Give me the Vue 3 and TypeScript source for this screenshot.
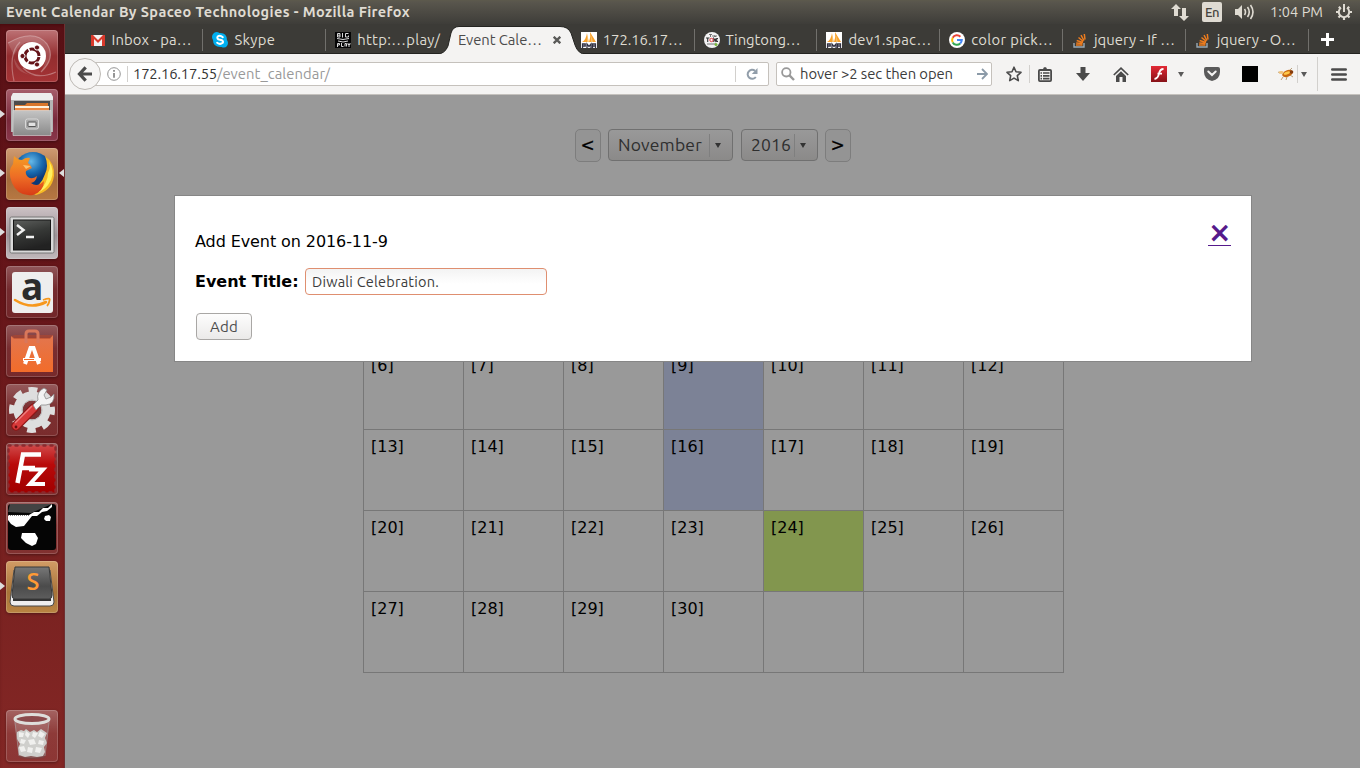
<script setup lang="ts">
import type { Directive } from 'vue'

// Spreads a label's letters so that it fills the given width.
const vFit: Directive<HTMLElement, number> = {
  mounted(el, { value }) {
    const count = (el.textContent ?? '').length
    const natural = el.getBoundingClientRect().width
    if (count > 0) el.style.letterSpacing = `${(value - natural) / count}px`
  },
}

interface Tab { icon: string; label: string; width: number; active?: boolean; sep?: boolean }
const tabs: Tab[] = [
  { icon: 'gmail', label: 'Inbox - pa…', width: 80, sep: true },
  { icon: 'skype', label: 'Skype', width: 41, sep: true },
  { icon: 'bigplay', label: 'http:…play/', width: 83 },
  { icon: '', label: 'Event Cale…', width: 84, active: true },
  { icon: 'pma', label: '172.16.17…', width: 80, sep: true },
  { icon: 'ting', label: 'Tingtong…', width: 75, sep: true },
  { icon: 'pma', label: 'dev1.spac…', width: 83, sep: true },
  { icon: 'google', label: 'color pick…', width: 82, sep: true },
  { icon: 'stack', label: 'jquery - If …', width: 81, sep: true },
  { icon: 'stack', label: 'jquery - O…', width: 79, sep: true },
]

interface App { id: string; running?: boolean; focused?: boolean }
const apps: App[] = [
  { id: 'dash' }, { id: 'files', running: true }, { id: 'firefox', running: true, focused: true },
  { id: 'terminal', running: true }, { id: 'amazon' }, { id: 'software' }, { id: 'settings' },
  { id: 'filezilla' }, { id: 'meld' }, { id: 'sublime', running: true }, { id: 'trash' },
]

// The visible weeks: the 6th to the 30th, padded to full rows.
const days: (number | null)[] = [...Array.from({ length: 25 }, (_, i) => i + 6), null, null, null]
const weeks = Array.from({ length: 4 }, (_, w) => days.slice(w * 7, w * 7 + 7))
</script>

<template>
  <div class="desktop">
    <header class="panel">
      <span v-fit="404" class="window-title">Event Calendar By Spaceo Technologies - Mozilla Firefox</span>
      <div class="indicators">
        <svg class="net" width="18" height="17" viewBox="0 0 18 17"><path fill="#dfdbd2" d="M5 0 10 5H7V12H3V5H0ZM13 17 8 12H11V4H15V12H18Z" /></svg>
        <span class="lang">En</span>
        <svg class="vol" width="21" height="16" viewBox="0 0 21 16"><path fill="#dfdbd2" d="M1 5H4L8 1V15L4 11H1Z" /><path fill="none" stroke="#dfdbd2" stroke-width="1.6" d="M10.5 5Q12.5 8 10.5 11M13.5 3Q17 8 13.5 13M16.5 1Q21.5 8 16.5 15" /></svg>
        <span v-fit="53" class="clock">1:04 PM</span>
        <svg class="gear" width="16" height="16" viewBox="0 0 16 16"><g fill="none" stroke="#dfdbd2"><path stroke-width="2" d="M5 3.7A5.2 5.2 0 1 0 11 3.7" /><path stroke-width="2" d="M8 0V8" /><path stroke-width="2.2" d="M2.8 2.8 4.3 4.3M13.2 2.8 11.7 4.3M0 8H3M13 8H16M2.5 13.5 4.5 11.5M13.5 13.5 11.5 11.5M8 13V16" /></g></svg>
      </div>
    </header>

    <div class="body">
      <nav class="launcher">
        <div v-for="app in apps" :key="app.id" class="tile" :class="app.id">
          <i v-if="app.running" class="run" />
          <i v-if="app.focused" class="focus" />
          <svg v-if="app.id === 'dash'" viewBox="0 0 52 52">
            <g fill="none" stroke="#fff" stroke-opacity=".3" stroke-width="1.2"><path d="M2 13Q28-2 41 14Q50 28 35 42" /><path d="M8 51Q2 24 14 12" /><path d="M50 42Q30 51 17 38" /></g>
            <path fill="#fff" fill-opacity=".14" d="M2 13Q28-2 41 14Q50 28 35 42Q46 22 31 13Q17 7 8 25ZM8 28Q8 42 25 45Q40 48 50 42Q20 55 8 28Z" />
            <circle cx="26" cy="26" r="14" fill="#fff" />
            <circle cx="26" cy="26" r="7" fill="none" stroke="#651318" stroke-width="3" stroke-dasharray="13.2 1.5" stroke-dashoffset="-1" />
            <g fill="#651318" stroke="#fff" stroke-width="1"><circle cx="16.5" cy="26" r="2.6" /><circle cx="31" cy="17.5" r="2.6" /><circle cx="31" cy="34.5" r="2.6" /></g>
          </svg>
          <svg v-else-if="app.id === 'files'" viewBox="0 0 52 52">
            <defs><linearGradient id="cab" x2="0" y2="1"><stop stop-color="#c4c4c4" /><stop offset="1" stop-color="#8a8a8a" /></linearGradient></defs>
            <path fill="#b4b4b4" d="M7 4H45L47 8V43H5V8Z" /><path fill="#ededed" d="M7 4H45L47 8V11H5V8Z" />
            <path fill="#4b4b4b" d="M8 12H44V22H8Z" /><path fill="#d9762b" d="M9 16H19L21 14H42V22H9Z" /><path fill="#fff2dd" d="M9 17H43V19H9Z" /><path fill="#eb8a45" d="M9 19H43V22H9Z" />
            <path fill="url(#cab)" stroke="#ddd" stroke-width=".6" d="M7 21.5H45V46.5H7Z" />
            <rect x="19.5" y="30" width="13" height="10" rx="2" fill="#a9a9a9" stroke="#d8d8d8" /><rect x="22" y="33" width="8" height="4.5" rx=".5" fill="#e2e2e2" stroke="#555" />
          </svg>
          <svg v-else-if="app.id === 'firefox'" viewBox="0 0 52 52">
            <defs><radialGradient id="globe" cx=".45" cy=".25"><stop stop-color="#65b8e8" /><stop offset=".6" stop-color="#1768ae" /><stop offset="1" stop-color="#0d3877" /></radialGradient><linearGradient id="fox" x2="0" y2="1"><stop stop-color="#f59c24" /><stop offset=".55" stop-color="#ed6b25" /><stop offset="1" stop-color="#d73c16" /></linearGradient></defs>
            <circle cx="27" cy="23" r="19" fill="url(#globe)" />
            <path fill="#f7ba24" d="M39 8Q49 15 48 28Q46 43 30 47L22 43Q35 39 39 26Q43 18 39 8Z" /><path fill="#fff05e" d="M43 13Q49 23 45 32Q40 42 32 44Q42 35 42 25Q45 20 43 13Z" />
            <path fill="url(#fox)" d="M8 8Q12 12 16 12Q20 9 24 10L22 15Q25 17 26 20L20 23Q19 26 22 29Q26 32 31 28Q30 34 25 35Q31 40 38 33Q38 43 27 47Q12 49 6 35Q1 23 7 16Z" />
            <path fill="#ffc36b" d="M17 17 25 18 20 21Z" />
          </svg>
          <svg v-else-if="app.id === 'terminal'" viewBox="0 0 52 52">
            <defs><linearGradient id="term" x2=".3" y2="1"><stop stop-color="#5d5f5d" /><stop offset=".5" stop-color="#373937" /><stop offset="1" stop-color="#222" /></linearGradient></defs>
            <rect x="4" y="10" width="44" height="36" rx="1.5" fill="#d9d9d9" stroke="#777" /><rect x="7.5" y="13" width="37" height="30" fill="url(#term)" stroke="#151515" />
            <path fill="none" stroke="#f2f2f2" stroke-width="2.5" d="M11 18 17.5 23 11 28M20 30H28" />
          </svg>
          <svg v-else-if="app.id === 'amazon'" viewBox="0 0 52 52">
            <rect x="6" y="6" width="41" height="41" rx="3" fill="#eee" />
            <text x="26.3" y="34" text-anchor="middle" font-family="Open Sans, sans-serif" font-size="37" font-weight="700" fill="#2b2b2b">a</text>
            <path fill="none" stroke="#f7981d" stroke-width="2.6" stroke-linecap="round" d="M9 34Q25 44 40 36" /><path fill="none" stroke="#f7981d" stroke-width="1.8" d="M37 34Q45 31 43.5 34.5 43 38 41 40" />
          </svg>
          <svg v-else-if="app.id === 'software'" viewBox="0 0 52 52">
            <defs><linearGradient id="bag" x2="0" y2="1"><stop stop-color="#e2764f" /><stop offset="1" stop-color="#f26c2a" /></linearGradient></defs>
            <path fill="url(#bag)" d="M5 11 8 13H44L47 10V47H5Z" /><path fill="#b5472b" fill-opacity=".55" d="M5 11 9 10H44L47 10 44 14H8Z" />
            <path fill="none" stroke="#d9775a" stroke-width="3" d="M20 18V9Q20 6 23 6H29Q32 6 32 9V18" />
            <path fill="none" stroke="#fff" stroke-width="4" d="M19 39 24.5 23H27.5L33 39" /><path stroke="#fff" stroke-width="3" d="M17 34.5H35" /><path stroke="#f26c2a" stroke-width="1" d="M18 34.5H28" />
          </svg>
          <svg v-else-if="app.id === 'settings'" viewBox="0 0 52 52">
            <g fill="none" stroke="#dedede"><circle cx="26" cy="26" r="14" stroke-width="9" /><circle cx="26" cy="26" r="20" stroke-width="6" stroke-dasharray="8.7 7" stroke-dashoffset="4" /></g>
            <circle cx="26" cy="26" r="10" fill="none" stroke="#bbb" />
            <path stroke="#8f1414" stroke-width="9.5" stroke-linecap="round" d="M10 42 28 24" /><path stroke="#d83a3a" stroke-width="7" stroke-linecap="round" d="M10 42 28 24" /><path stroke="#f08080" stroke-width="1.5" d="M9 39 26 22" />
            <path fill="#f3f3f3" stroke="#8c8c8c" stroke-width=".8" d="M27 21 32 16Q30 8 38 4L41 6 38 11 40 15 45 13 48 10Q49 20 40 21L35 21 30 26Z" /><circle cx="10" cy="43" r="1.4" fill="#661010" />
          </svg>
          <svg v-else-if="app.id === 'filezilla'" viewBox="0 0 52 52">
            <defs><linearGradient id="fz" x2="0" y2="1"><stop stop-color="#d04848" /><stop offset=".4" stop-color="#b90a0a" /><stop offset="1" stop-color="#a00000" /></linearGradient></defs>
            <rect x="2.5" y="2.5" width="47" height="47" fill="url(#fz)" stroke="#8c2a2e" stroke-width="2.4" stroke-dasharray="2 5" stroke-linecap="round" />
            <path fill="none" stroke="#fff" stroke-width="4.5" d="M35 11.5H17L11.5 40M14 25H29" /><path fill="none" stroke="#fff" stroke-width="4" d="M23 26.5H37L24 41H39" />
          </svg>
          <svg v-else-if="app.id === 'meld'" viewBox="0 0 52 52">
            <rect x="2" y="2" width="48" height="46" rx="3" fill="#050505" /><path fill="#777" fill-opacity=".55" d="M4 2H46L25 11 2 10Z" />
            <path fill="#fff" d="M2 13H23L28 10 33 10 37 6 42 6 46 2 46 5 41 9 36 10 31 14 26 14 22 19 18 24 10 25 5 22 2 18Z" /><path fill="none" stroke="#111" stroke-dasharray="1 1" d="M2 13H23" />
            <path fill="#fff" d="M39 14 43 13 45 15 44 19H40L38 17ZM16 31H29L32 36 30 42 26 44 20 41 15 36Z" />
          </svg>
          <svg v-else-if="app.id === 'sublime'" viewBox="0 0 52 52">
            <defs><linearGradient id="sub" x2="0" y2="1"><stop stop-color="#777" /><stop offset=".6" stop-color="#4b4b4b" /><stop offset="1" stop-color="#5d5d5d" /></linearGradient></defs>
            <path fill="#eee" stroke="#494949" d="M8 9H44L48 41Q48 45 44 45H8Q4 45 4 41Z" /><path fill="url(#sub)" stroke="#393939" d="M9 6H43L46 34Q46 38 43 38H9Q6 38 6 34Z" /><path stroke="#333" stroke-width="2" d="M7 39H45" />
            <text x="20.5" y="28.5" font-family="Open Sans, sans-serif" font-size="23" font-weight="600" fill="#ff9a35" textLength="13" lengthAdjust="spacingAndGlyphs">S</text>
          </svg>
          <svg v-else viewBox="0 0 52 52">
            <path fill="#ddd" fill-opacity=".2" d="M8 9H44L39 46Q26 50 13 46Z" />
            <path fill="#555" fill-opacity=".3" d="M12 44H40L38 48Q26 50 14 48Z" />
            <path fill="#cfcfcc" d="M11 22 15 20 18 21 20 19 24 22 28 20 31 22 35 19 41 23 39 28 41 33 38 37 39 42 37 46 31 47 25 46 19 47 13 45 12 38 14 34 11 29Z" />
            <path fill="#f0f0ee" d="M13 22 18 23 17 27 13 27ZM20 21 24 24 22 28 19 25ZM27 22 32 23 29 28 26 26ZM34 21 39 24 36 28 32 26ZM15 29 20 30 18 34 14 33ZM22 30 28 29 30 34 24 35ZM33 30 38 31 37 35 32 34ZM13 37 18 36 20 41 15 42ZM22 37 27 38 26 43 21 42ZM30 37 36 38 34 43 29 42Z" />
            <ellipse cx="26" cy="9" rx="17" ry="4.5" fill="#8b4a4c" stroke="#dededb" stroke-width="3" /><path fill="none" stroke="#aaa" stroke-opacity=".5" d="M9 12 13 46M43 12 39 46" />
          </svg>
        </div>
      </nav>

      <main class="browser">
        <div class="tabs">
          <div v-for="(tab, n) in tabs" :key="n" class="tab" :class="{ active: tab.active, sep: tab.sep }">
            <svg v-if="tab.active" class="tab-shape" viewBox="0 0 148 30" width="148" height="30"><path fill="#f4f3f2" stroke="#242421" d="M-2 30.5Q7 30 10 22L13 9Q15 2.5 21 2.5H122Q130 2.5 133 9L137 21Q140 30 148 30.5" /></svg>
            <svg v-if="tab.icon" class="fav" width="16" height="16" viewBox="0 0 16 16">
              <template v-if="tab.icon === 'gmail'"><path fill="#f2f2f2" d="M1 3H15V14H1Z" /><path fill="#d9392b" d="M1 3H3L8 8 13 3H15V14H12V7L8 11 4 7V14H1Z" /></template>
              <template v-else-if="tab.icon === 'skype'"><path fill="#00aff0" d="M4.5 0Q6.2 0 7.5 1Q14.8.5 15 8Q17 11 15 14Q13 16.5 9.5 15Q1 15.5 1 8Q-1 5 1 2Q2.5 0 4.5 0Z" /><path fill="none" stroke="#fff" stroke-width="2" stroke-linecap="round" d="M10.8 5.2Q8 2.8 5.7 4.5Q4.3 7 8 7.7 12 8.5 10.8 10.8 8 13 5.2 10.7" /></template>
              <template v-else-if="tab.icon === 'bigplay'"><rect width="16" height="16" fill="#050505" /><g fill="none" stroke="#d8d8d8"><path d="M2.5 1.5H5V5H2.5ZM2 3.2H5M7.5 1V5.5M13.5 1.5H10.5V5H13.5V3.5M2 6.5Q8 8.5 14 6.5M3 9Q8 11 13 9M2.5 15V11.5H4.5V13H3M6.5 11V14.5H8.5M10 14.5V11.5H11.5V14.5M13 11V12.5H15V11M14 12V15" /></g></template>
              <template v-else-if="tab.icon === 'pma'"><rect width="16" height="16" fill="#fff" /><path fill="#f9a22b" d="M1 10Q5 8 6 1L7 10ZM8 10Q10 5 9 0L15 10Z" /><path fill="#f6c06b" d="M6 10V2L8 10ZM10 10V3L12 10Z" /><path fill="none" stroke="#334" stroke-width="1.3" d="M1.5 16V12H4.2V14H2M6 16V12L8 14.5 10 12V16M11.5 16V12H14.5V16M11.5 14H14.5" /></template>
              <template v-else-if="tab.icon === 'ting'"><circle cx="8" cy="8" r="8" fill="#f3f3f3" /><g fill="none" stroke="#666" stroke-width=".9"><path d="M5 2.5H8M6.5 2.5V5M9 3V5M10.5 5V3.5L12 5V3M3 12H12" /></g><path fill="none" stroke="#333" stroke-width="1.1" d="M2 6H5.5M3.7 6V10M9.8 10V6.5L11.5 9V6.5M14 6.5H12.7V9.5H14" /><circle cx="7.5" cy="8" r="1.7" fill="none" stroke="#e8363d" /><circle cx="12" cy="12.5" r="1.5" fill="#79b73b" /></template>
              <template v-else-if="tab.icon === 'google'"><circle cx="8" cy="8" r="8" fill="#fff" /><g fill="none" stroke-width="2"><path stroke="#ea4335" d="M3.7 5.7A4.8 4.8 0 0 1 11.4 4.7" /><path stroke="#fbbc05" d="M3.7 5.7A5 5 0 0 0 3.7 10.4" /><path stroke="#34a853" d="M3.7 10.4A4.8 4.8 0 0 0 11.2 11.5" /><path stroke="#4285f4" d="M11.2 11.5Q12.7 10 12.8 8H8" /></g></template>
              <template v-else><path fill="none" stroke="#9aaab5" stroke-width="1.4" d="M2 11V15H12V11" /><path stroke="#ed7c1e" stroke-width="1.5" d="M4 13H10.5M4.2 11 10.5 11.5M4.7 8.5 11 10.5M6.5 5.5 11.3 9.3M9 3.2 12 8.5M12.3 2 13 7.5" /></template>
            </svg>
            <span v-fit="tab.width" class="tab-label">{{ tab.label }}</span>
            <svg v-if="tab.active" class="tab-close" width="8" height="8" viewBox="0 0 8 8"><path stroke="#5a5a58" stroke-width="2.3" d="M.7.7 7.3 7.3M7.3.7.7 7.3" /></svg>
          </div>
          <svg class="new-tab" width="13" height="13" viewBox="0 0 13 13"><path stroke="#fff" stroke-width="3" d="M6.5 0V13M0 6.5H13" /></svg>
        </div>

        <div class="toolbar">
          <div class="back"><svg width="16" height="16" viewBox="0 0 16 16"><path fill="none" stroke="#4b4b4b" stroke-width="3.2" d="M8.7 1.3 2.5 8 8.7 14.7M2.5 8H15" /></svg></div>
          <div class="url">
            <svg class="info" width="14" height="14" viewBox="0 0 14 14"><circle cx="7" cy="7" r="6.3" fill="none" stroke="#949494" /><path stroke="#8a8a8a" stroke-width="1.8" d="M7 6V10.8M7 3V4.8" /></svg>
            <i class="url-sep" />
            <span v-fit="84" class="host">172.16.17.55</span><span v-fit="113" class="path">/event_calendar/</span>
            <i class="url-sep reload-sep" />
            <svg class="reload" width="12" height="12" viewBox="0 0 12 12"><path fill="none" stroke="#929eaa" stroke-width="2" d="M9 2.8A4.5 4.5 0 1 0 9.8 9" /><path fill="#929eaa" d="M11.5 0V6H5.8Z" /></svg>
          </div>
          <div class="search">
            <svg width="14" height="14" viewBox="0 0 14 14"><circle cx="5.3" cy="5.3" r="4.2" fill="none" stroke="#999" stroke-width="1.8" /><path stroke="#999" stroke-width="2.4" d="M8.2 8.2 13 13" /></svg>
            <span v-fit="153">hover &gt;2 sec then open</span>
            <svg class="go" width="11" height="12" viewBox="0 0 11 12"><path fill="none" stroke="#8b9aa8" stroke-width="1.8" d="M0 6H9M5 1 10 6 5 11" /></svg>
          </div>
          <div class="tools">
            <svg width="16" height="16" viewBox="0 0 16 16"><path fill="none" stroke="#4a4a4a" stroke-width="1.6" stroke-linejoin="round" d="M8 1.2 10 5.7 15 6.3 11.3 9.6 12.3 14.6 8 12.1 3.7 14.6 4.7 9.6 1 6.3 6 5.7Z" /></svg>
            <i class="tool-sep first" />
            <svg class="clip" width="14" height="15" viewBox="0 0 14 15"><path fill="none" stroke="#4a4a4a" stroke-width="1.8" d="M2 3H12Q13.1 3 13.1 4V13Q13.1 14.1 12 14.1H2Q.9 14.1.9 13V4Q.9 3 2 3Z" /><path fill="#4a4a4a" d="M3.5 4V2.5H5Q5 0 7 0T9 2.5H10.5V4Z" /><path stroke="#4a4a4a" stroke-width="1.7" d="M2.5 6H4M5 6H11.5M2.5 8.8H4M5 8.8H11.5M2.5 11.6H4M5 11.6H11.5" /></svg>
            <svg class="down" width="14" height="14" viewBox="0 0 14 14"><path fill="#4a4a4a" d="M4.5 0H9.5V6H14L7 14 0 6H4.5Z" /></svg>
            <svg class="home" width="16" height="15" viewBox="0 0 16 15"><path fill="none" stroke="#4a4a4a" stroke-width="1.7" d="M.8 8 8 1.2 15.2 8" /><path fill="#4a4a4a" d="M3 9 8 4.2 13 9V15H9.5V10H6.5V15H3Z" /></svg>
            <svg class="flash" width="16" height="16" viewBox="0 0 16 16"><defs><linearGradient id="flash" x2="0" y2="1"><stop stop-color="#e32935" /><stop offset="1" stop-color="#861117" /></linearGradient></defs><path fill="url(#flash)" d="M0 0H16V16H0Z" /><path fill="none" stroke="#fff" stroke-width="1.8" d="M12.5 3Q9 3 8 7.5Q7 12.5 3.5 13M6.5 7.7H11" /></svg>
            <i class="caret c1" />
            <svg class="pocket" width="16" height="14" viewBox="0 0 16 14"><path fill="#5a5a5a" d="M2 0H14Q16 0 16 2V5Q16 12 8 14Q0 12 0 5V2Q0 0 2 0Z" /><path fill="none" stroke="#f4f3f2" stroke-width="2" stroke-linecap="round" d="M4.3 4.5 8 8 11.7 4.5" /></svg>
            <i class="swatch" />
            <svg class="bug" width="16" height="13" viewBox="0 0 16 13"><path stroke="#a98a5c" stroke-width=".8" d="M2 5 0 4M5 9 3 12M9 9 8 12M12 7 15 9M12 2 14 0" /><ellipse cx="9.5" cy="5.5" rx="5.5" ry="3.3" transform="rotate(-20 9.5 5.5)" fill="#c9680f" /><ellipse cx="9" cy="5" rx="3.4" ry="1.4" transform="rotate(-20 9 5)" fill="#ffc94a" /><circle cx="13.5" cy="4" r="1.8" fill="#853b0d" /><ellipse cx="3.2" cy="4.5" rx="2.6" ry="1.4" fill="#efc27c" /></svg>
            <i class="tool-sep second" />
            <i class="caret c2" />
            <i class="tool-sep third" />
            <svg class="menu" width="16" height="13" viewBox="0 0 16 13"><path stroke="#4b4b4b" stroke-width="2.6" stroke-linecap="round" d="M1.3 1.5H14.7M1.3 6.5H14.7M1.3 11.5H14.7" /></svg>
          </div>
        </div>

        <section class="page">
          <div class="picker">
            <span class="step">&lt;</span>
            <span class="select month"><span v-fit="84">November</span><i class="select-sep" /><i class="caret" /></span>
            <span class="select year"><span v-fit="40">2016</span><i class="select-sep" /><i class="caret" /></span>
            <span class="step">&gt;</span>
          </div>
          <table class="calendar">
            <tbody>
              <tr v-for="(week, w) in weeks" :key="w">
                <td v-for="(day, d) in week" :key="d" :class="{ event: day === 9 || day === 16, today: day === 24 }">{{ day ? `[${day}]` : '' }}</td>
              </tr>
            </tbody>
          </table>
          <div class="dialog">
            <a class="close">×</a>
            <p class="heading">Add Event on 2016-11-9</p>
            <div class="field"><b>Event Title:</b><span class="input"><span v-fit="127">Diwali Celebration.</span></span></div>
            <span class="add"><span v-fit="28">Add</span></span>
          </div>
        </section>
      </main>
    </div>
  </div>
</template>

<style>
body { margin: 0; overflow: hidden; }
</style>

<style scoped>
* { box-sizing: border-box; }
.desktop { width: 1360px; height: 768px; display: flex; flex-direction: column; font: 14.8px/20px Ubuntu, "Noto Sans", "Open Sans", sans-serif; overflow: hidden; white-space: nowrap; }
i { display: block; flex: none; }
svg { display: block; flex: none; }
.panel { height: 24px; flex: none; display: flex; align-items: center; justify-content: space-between; padding: 0 8px 0 6px; background: linear-gradient(#5d5a4c 0, #59564d 2px, #3e3d39 100%); color: #dfdbd2; }
.window-title { font-weight: 700; font-size: 14.5px; }
.indicators { display: flex; align-items: center; }
.lang { width: 20px; height: 20px; margin-left: 13px; border-radius: 2px; background: #dfdbd2; color: #45433d; font-size: 13px; font-weight: 500; text-align: center; line-height: 21px; letter-spacing: -.4px; }
.vol { margin-left: 12px; }
.clock { margin-left: 15px; font-size: 14.5px; }
.gear { margin-left: 13px; }

.body { flex: 1; display: flex; min-height: 0; }
.launcher { width: 65px; flex: none; display: flex; flex-direction: column; gap: 7px; padding: 6px 0 6px 6px; background: linear-gradient(#5a1116 0, #661519 36%, #75201f 65%, #842725 100%); border-right: 1px solid #6f3032; box-shadow: inset 0 3px 4px -2px #3008; }
.tile { position: relative; width: 52px; height: 52px; flex: none; border-radius: 4px; background: linear-gradient(#ffffff48, #ffffff18 45%, #ffffff12); box-shadow: inset 0 0 0 1px #ffffff2e, 0 1px 3px #0005; }
.tile svg { width: 52px; height: 52px; overflow: visible; }
.tile.dash { background: linear-gradient(#bd7275, #932d2f 50%, #a53335); }
.tile.files { background: linear-gradient(#a75e6b, #79293b 60%, #8a384b); }
.tile.firefox { background: linear-gradient(#cf9b73, #a56b3b 60%, #b77842); }
.tile.terminal { background: linear-gradient(#ccc2c5, #9d9397 55%, #c1b9bb); }
.tile.sublime { background: linear-gradient(#d29c66, #a87338 60%, #b98443); }
.tile.trash { margin-top: auto; }
.run { position: absolute; left: -6px; top: 21px; border: solid transparent; border-width: 4px 0 4px 5px; border-left-color: #ddd; }
.focus { position: absolute; right: -6px; top: 21px; border: solid transparent; border-width: 4px 5px 4px 0; border-right-color: #ddd; }

.browser { flex: 1; display: flex; flex-direction: column; min-width: 0; }
.tabs { height: 30px; flex: none; display: flex; align-items: center; padding-left: 15.6px; background: #3c3b37; border-bottom: 1px solid #242421; }
.tab { position: relative; width: 122.8px; height: 30px; flex: none; display: flex; align-items: center; padding: 3px 0 0 9px; color: #dfdbd2; }
.tab.sep::after { content: ""; position: absolute; right: 0; top: 5px; width: 1px; height: 22px; background: #71706c; }
.fav { margin-right: 6px; }
.tab.active { color: #4c4c4c; z-index: 1; }
.tab-shape { position: absolute; left: -11px; top: 0; }
.tab-label { position: relative; }
.tab-close { position: relative; margin-left: 11px; }
.new-tab { margin: 2px 0 0 12px; }
.toolbar { height: 41px; flex: none; display: flex; align-items: center; background: #f4f3f2; border-bottom: 1px solid #c4c1bd; color: #3c3c3c; }
.back { position: relative; z-index: 1; width: 32px; height: 32px; margin-left: 4px; border: 1px solid #bdb9b4; border-radius: 50%; background: #f6f5f4; display: grid; place-items: center; }
.url { width: 675px; height: 24px; margin-left: -7px; padding-left: 12px; border: 1px solid #c5c1bc; border-radius: 2px; background: #fff; display: flex; align-items: center; }
.url-sep { width: 1px; height: 16px; margin: 0 5px 0 6px; background: #d2d0cd; }
.host { color: #333; }
.path { color: #999; }
.reload-sep { margin: 0 10px 0 auto; }
.reload { margin-right: 10px; }
.search { width: 216px; height: 24px; margin-left: 7px; padding: 0 3px 0 4px; border: 1px solid #c5c1bc; border-radius: 2px; background: #fff; display: flex; align-items: center; gap: 5px; }
.go { margin-left: auto; }
.tools { display: flex; align-items: center; margin-left: 14px; }
.tool-sep { width: 1px; height: 18px; background: #d2d0cd; }
.first { margin: 0 8px 0 7px; }
.down { margin-left: 24px; }
.home { margin-left: 23px; }
.flash { margin-left: 22px; }
.caret { border: solid transparent; border-width: 5px 3px 0; border-top-color: #5a5a5a; }
.c1 { margin-left: 11px; }
.pocket { margin-left: 20px; }
.swatch { width: 16px; height: 16px; margin-left: 22px; background: #000; }
.bug { margin-left: 20px; }
.second { margin: 0 3px 0 3px; }
.third { height: 34px; margin: 0 13px 0 10px; }

.page { position: relative; flex: 1; background: #999; font: 16px/20px "DejaVu Sans", sans-serif; color: #000; }
.picker { height: 33px; display: flex; justify-content: center; align-items: flex-start; gap: 7px; margin-top: 34px; }
.step { width: 26px; height: 33px; border: 1px solid #7d7d7d; border-radius: 5px; background: #949494; text-align: center; line-height: 31px; font-size: 17px; -webkit-text-stroke: .2px; }
.select { height: 32px; display: flex; align-items: center; padding-left: 9.5px; border: 1px solid #707070; border-radius: 4px; background: linear-gradient(#999, #8b8a89); color: #2e2e2e; font: 17.5px/20px Ubuntu, "Noto Sans", sans-serif; }
.month { width: 125px; }
.year { width: 77px; margin-left: 1px; }
.select-sep { width: 1px; height: 23px; margin: 0 5px 0 auto; background: #7f7f7f; }
.select .caret { border-top-color: #333; margin-right: 11px; }
.calendar { margin: 186px 0 0 298px; width: 701px; table-layout: fixed; border-collapse: collapse; }
.calendar td { height: 81px; padding: 7px 6px 0 7px; border: 1px solid #777; vertical-align: top; line-height: 19px; }
.calendar .event { background: #7c8296; }
.calendar .today { background: #82964e; }
.dialog { position: absolute; left: 109px; top: 100px; width: 1078px; height: 167px; padding: 36px 20px 0; border: 1px solid #868686; background: #fff; }
.close { position: absolute; left: 1033px; top: 22px; width: 23px; height: 28px; border-bottom: 1px solid #551a8b; color: #551a8b; font-weight: 700; font-size: 28px; line-height: 30px; }
.heading { margin: 0; letter-spacing: -.09px; }
.field { display: flex; align-items: center; margin-top: 16px; }
.field b { width: 110px; }
.input { width: 242px; height: 27px; padding-left: 6px; border: 1px solid #df8f70; border-radius: 4px; background: linear-gradient(#f3f3f3, #fff 60%); color: #3c3c3c; font: 14.5px/26px Ubuntu, "Noto Sans", sans-serif; }
.add { display: block; width: 56px; height: 27px; margin: 18px 0 0 1px; padding-left: 13px; border: 1px solid #a9a7a5; border-radius: 4px; background: linear-gradient(#fdfdfd, #ebeae9); color: #4c4c4c; font: 15px/26px Ubuntu, "Noto Sans", sans-serif; }
</style>
